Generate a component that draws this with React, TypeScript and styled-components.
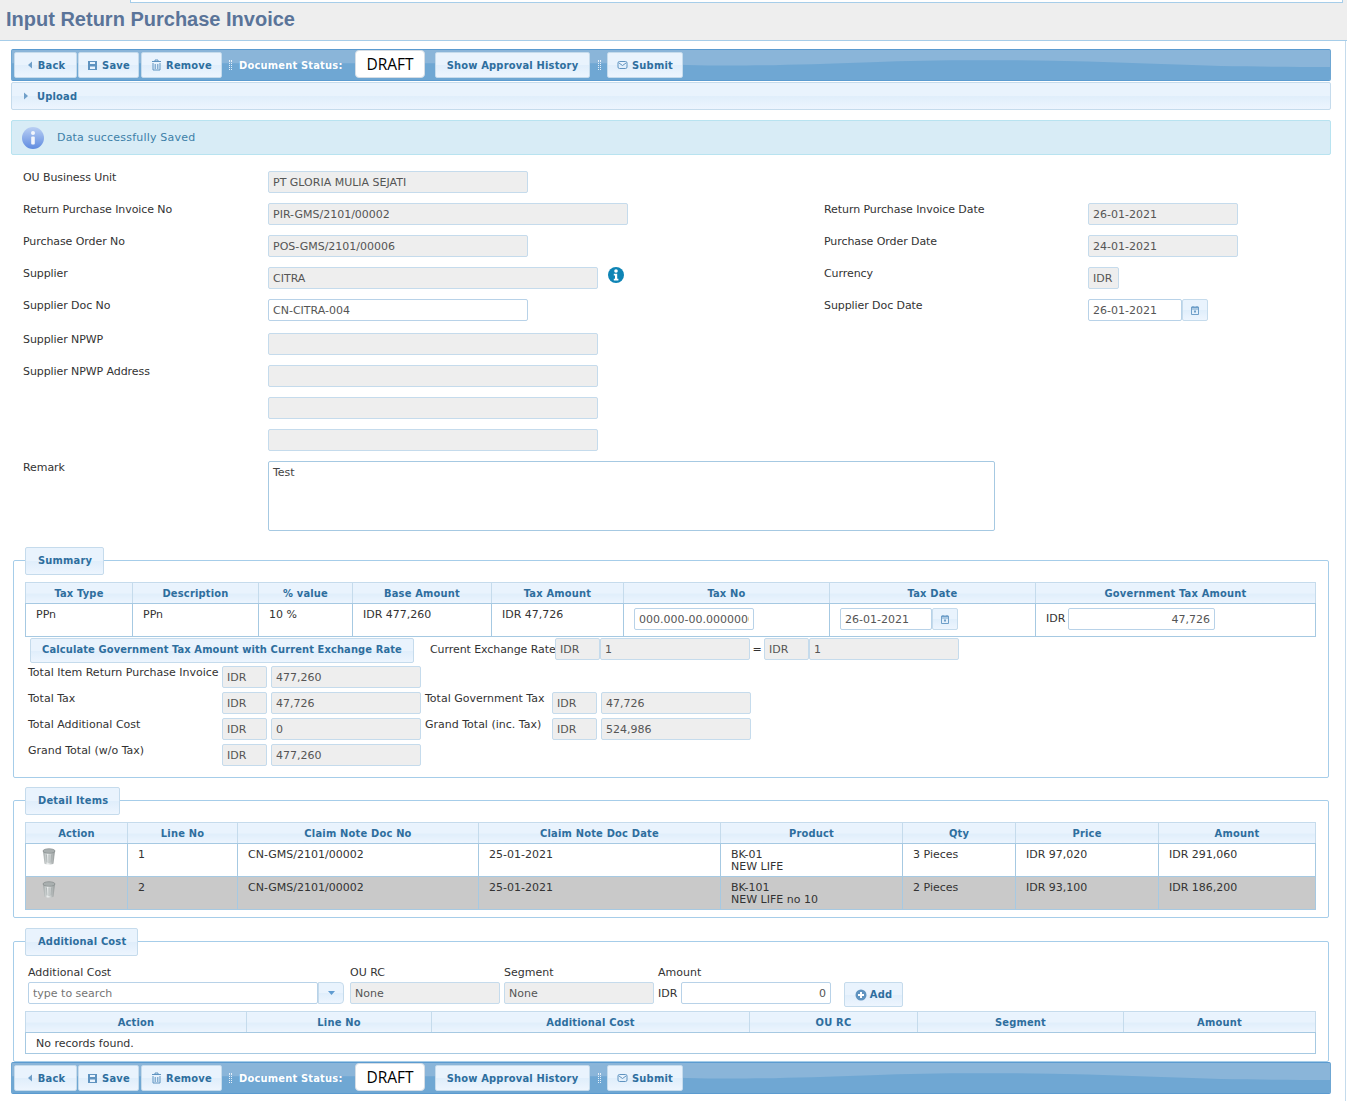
import React from "react";
import styled, { createGlobalStyle } from "styled-components";

const GlobalStyle = createGlobalStyle`
  html, body {
    margin: 0;
    padding: 0;
    background: #fff;
    overflow: hidden;
  }
  body {
    font-family: "DejaVu Sans", Verdana, sans-serif;
    font-size: 11px;
    color: #333;
  }
  * {
    box-sizing: border-box;
  }
`;

const barGradient = "linear-gradient(to bottom, #e9f3fd 0%, #e9f3fd 50%, #e0eefb 52%, #edf5fe 100%)";
const boldFont = `bold 11px "DejaVu Sans Condensed", "DejaVu Sans", Verdana, sans-serif`;

const Page = styled.div`
  width: 1347px;
  height: 1101px;
`;

const TitleBar = styled.div`
  height: 41px;
  background: #eeeeee;
  border-bottom: 1px solid #a6cde9;
  padding-left: 130px;
`;

const TopStripe = styled.div`
  width: 1213px;
  height: 3px;
  background: #fff;
  border: 1px solid #a6cde9;
  border-top: none;
`;

const Title = styled.h1`
  margin: 3px 0 0 -124px;
  font: bold 20px/26px "Liberation Sans", Arial, sans-serif;
  color: #5a7499;
`;

const Content = styled.div`
  width: 1346px;
  border-right: 1px solid #c5dbec;
  padding: 8px 0 0 11px;
  height: 1060px;
`;

const ToolbarWrap = styled.div`
  position: relative;
  width: 1320px;
  height: 32px;
  display: flex;
  align-items: center;
  padding-left: 2px;
  background: #8ab5d9;
  border: 1px solid #5b9bd0;
  border-left-color: #6fa7d3;
  border-right-color: #6fa7d3;
  overflow: hidden;
  border-radius: 2px;
`;

const Wave = styled.svg`
  position: absolute;
  left: 0;
  top: 0;
  width: 100%;
  height: 100%;
`;

const ToolButton = styled.button<{ $w: number; $ml?: number }>`
  position: relative;
  width: ${(p) => p.$w}px;
  height: 26px;
  margin-left: ${(p) => p.$ml ?? 0}px;
  padding: 0;
  display: flex;
  align-items: center;
  justify-content: center;
  gap: 4px;
  background: ${barGradient};
  border: 1px solid #c5dbec;
  border-radius: 2px;
  color: #2e6e9e;
  font: ${boldFont};
  letter-spacing: 0.2px;
  white-space: nowrap;
`;

const Grip = styled.span<{ $ml: number }>`
  position: relative;
  width: 3px;
  height: 10px;
  margin-left: ${(p) => p.$ml}px;
  border-left: 1px dotted #e4eff9;
  border-right: 1px dotted #e4eff9;
`;

const StatusLabel = styled.span`
  position: relative;
  width: 116px;
  margin-left: 7px;
  color: #fff;
  font: ${boldFont};
  letter-spacing: 0.2px;
  white-space: nowrap;
`;

const StatusBox = styled.div`
  position: relative;
  width: 70px;
  height: 28px;
  margin-top: -2px;
  background: #fff;
  border: 1px solid #d5dde5;
  border-radius: 4px;
  color: #000;
  font: 15.5px/26px "Open Sans", "DejaVu Sans", sans-serif;
  text-align: center;
`;

const UploadBar = styled.div`
  width: 1320px;
  height: 28px;
  margin-top: 1px;
  display: flex;
  align-items: center;
  gap: 7px;
  padding-left: 10px;
  background: ${barGradient};
  border: 1px solid #c5dbec;
  border-radius: 2px;
  color: #2e6e9e;
  font: ${boldFont};
  letter-spacing: 0.2px;
`;

const Message = styled.div`
  width: 1320px;
  height: 35px;
  margin-top: 10px;
  display: flex;
  align-items: center;
  gap: 12px;
  padding-left: 9px;
  background: #d8ecf6;
  border: 1px solid #b8e3f0;
  border-radius: 2px;
  color: #3d7fa8;
  letter-spacing: 0.2px;
`;

const Form = styled.div`
  padding: 16px 0 0 12px;
`;

const Row = styled.div<{ $h?: number }>`
  display: flex;
  height: ${(p) => p.$h ?? 32}px;
`;

const Side = styled.div<{ $w: number }>`
  display: flex;
  align-items: flex-start;
  width: ${(p) => p.$w}px;
  flex: none;
`;

const Label = styled.label<{ $w?: number }>`
  width: ${(p) => p.$w ?? 245}px;
  flex: none;
  line-height: 13px;
  color: #333;
  letter-spacing: -0.08px;
  white-space: nowrap;
`;

const Field = styled.input<{ $w: number; $end?: boolean; $ml?: number }>`
  width: ${(p) => p.$w}px;
  height: 22px;
  flex: none;
  margin: 0 0 0 ${(p) => p.$ml ?? 0}px;
  padding: 0 4px;
  background: ${(p) => (p.readOnly ? "#eeeeee" : "#fff")};
  border: 1px solid ${(p) => (p.readOnly ? "#c5dbec" : "#b8d2e8")};
  border-radius: 2px;
  color: #555;
  font: 11px "DejaVu Sans", Verdana, sans-serif;
  text-align: ${(p) => (p.$end ? "right" : "left")};
  outline: none;
`;

const CalButton = styled.span`
  width: 26px;
  height: 22px;
  flex: none;
  display: inline-flex;
  align-items: center;
  justify-content: center;
  background: ${barGradient};
  border: 1px solid #c5dbec;
  border-radius: 2px;
`;

const RemarkBox = styled.textarea`
  width: 727px;
  height: 70px;
  flex: none;
  margin: 0;
  padding: 4px;
  background: #fff;
  border: 1px solid #a6c9e2;
  border-radius: 2px;
  color: #444;
  font: 11px "DejaVu Sans", Verdana, sans-serif;
  resize: none;
  outline: none;
`;

const Fieldset = styled.fieldset<{ $top: number; $h: number }>`
  width: 1316px;
  height: ${(p) => p.$h}px;
  margin: ${(p) => p.$top}px 0 0 2px;
  padding: 8px 11px 0 11px;
  border: 1px solid #a6cde9;
  border-radius: 2px;
  min-width: 0;
`;

const Legend = styled.legend`
  position: relative;
  top: 1px;
  height: 28px;
  padding: 0 11px 0 12px;
  margin: 0;
  background: ${barGradient};
  border: 1px solid #c5dbec;
  border-radius: 2px;
  color: #2e6e9e;
  font: ${boldFont};
  letter-spacing: 0.2px;
  line-height: 25px;
`;

const Table = styled.table`
  width: 1290px;
  border-collapse: collapse;
  table-layout: fixed;
  border: 1px solid #a6c9e2;
`;

const Th = styled.th`
  height: 21px;
  padding: 0;
  background: ${barGradient};
  border: 1px solid #c5dbec;
  border-bottom-color: #a6c9e2;
  color: #2e6e9e;
  font: ${boldFont};
  letter-spacing: 0.2px;
  text-align: center;
`;

const Td = styled.td<{ $dark?: boolean }>`
  height: 33px;
  padding: 5px 10px 0;
  vertical-align: top;
  background: ${(p) => (p.$dark ? "#c9c9c9" : "#fff")};
  border: 1px solid #a6c9e2;
  color: #333;
  line-height: 12px;
  white-space: nowrap;
`;

const CellFlex = styled.div`
  display: flex;
  align-items: center;
  margin-top: -1px;
`;

const UnitText = styled.span<{ $w: number }>`
  width: ${(p) => p.$w}px;
  flex: none;
  color: #333;
`;

const CalcRow = styled.div`
  display: flex;
  align-items: flex-start;
  margin: 1px 0 0 5px;
  height: 28px;
`;

const WideButton = styled.button`
  width: 384px;
  height: 25px;
  flex: none;
  padding: 0 0 2px;
  background: ${barGradient};
  border: 1px solid #c5dbec;
  border-radius: 2px;
  color: #2e6e9e;
  font: ${boldFont};
  letter-spacing: 0.12px;
  white-space: nowrap;
`;

const InlineLabel = styled.span<{ $w: number; $ml?: number; $center?: boolean }>`
  width: ${(p) => p.$w}px;
  flex: none;
  margin-left: ${(p) => p.$ml ?? 0}px;
  line-height: 23px;
  letter-spacing: -0.08px;
  text-align: ${(p) => (p.$center ? "center" : "left")};
  white-space: nowrap;
  color: #333;
`;

const TotalsGrid = styled.div`
  display: flex;
  margin-left: 3px;
`;

const TotalsColumn = styled.div<{ $pt?: number; $ml?: number }>`
  padding-top: ${(p) => p.$pt ?? 0}px;
  margin-left: ${(p) => p.$ml ?? 0}px;
`;

const TotalRow = styled.div`
  display: flex;
  height: 26px;
`;

const TotalLabel = styled.span<{ $w: number }>`
  width: ${(p) => p.$w}px;
  flex: none;
  line-height: 13px;
  white-space: nowrap;
  color: #333;
`;

const AddRow = styled.div`
  display: flex;
  margin: 3px 0 0 3px;
  height: 45px;
`;

const AddCol = styled.div<{ $w: number }>`
  width: ${(p) => p.$w}px;
  flex: none;
  line-height: 13px;
  color: #333;
`;

const AddLabel = styled.div`
  height: 16px;
`;

const Combo = styled.div`
  display: flex;
`;

const ComboArrow = styled.span`
  width: 26px;
  height: 22px;
  display: inline-flex;
  align-items: center;
  justify-content: center;
  background: ${barGradient};
  border: 1px solid #c5dbec;
  border-radius: 0 4px 4px 0;
`;

const AmountLine = styled.div`
  display: flex;
  align-items: center;
`;

const AddButton = styled.button`
  width: 59px;
  height: 25px;
  margin: 16px 0 0 11px;
  padding: 0;
  display: inline-flex;
  align-items: center;
  justify-content: center;
  gap: 3px;
  flex: none;
  background: ${barGradient};
  border: 1px solid #c5dbec;
  border-radius: 2px;
  color: #2e6e9e;
  font: ${boldFont};
  letter-spacing: 0.2px;
`;

const InfoSlot = styled.span`
  margin: 0 0 0 10px;
  display: inline-flex;
`;

const IconCell = styled.div`
  margin-top: -1px;
  padding-left: 6px;
`;

const NoRecords = styled.td`
  height: 21px;
  padding: 0 10px;
  background: #fff;
  border: 1px solid #a6c9e2;
  color: #333;
`;

const BackIcon = () => (
  <svg width="8" height="10" viewBox="0 0 8 10">
    <path d="M6 1.5 2 5l4 3.5z" fill="#6f9fc9" />
  </svg>
);

const RightArrow = () => (
  <svg width="8" height="10" viewBox="0 0 8 10">
    <path d="M2 1.5 6 5 2 8.500z" fill="#6f9fc9" />
  </svg>
);

const SaveIcon = () => (
  <svg width="11" height="11" viewBox="0 0 11 11">
    <path d="M1 1h9v9H1z" fill="#5f93c0" />
    <path d="M3 2h5v2H3zM3 6.500h5V9H3z" fill="#e9f3fd" />
  </svg>
);

const BinIcon = () => (
  <svg width="11" height="12" viewBox="0 0 11 12">
    <path d="M1 2.500h9M4 2.500V1h3v1.500M2 4v7h7V4M4.200 5v5M6.800 5v5" fill="none" stroke="#5f93c0" strokeWidth="1" />
  </svg>
);

const MailIcon = () => (
  <svg width="11" height="10" viewBox="0 0 11 10">
    <rect x="1" y="1.500" width="9" height="7" rx="1.500" fill="none" stroke="#5f93c0" />
    <path d="M2 3l3.500 2.500L9 3" fill="none" stroke="#5f93c0" />
  </svg>
);

const CalendarIcon = () => (
  <svg width="10" height="11" viewBox="0 0 10 11">
    <path d="M1.500 2.500h7v7h-7z" fill="none" stroke="#6f9fc9" />
    <path d="M1.500 2h7v2h-7zM3 1v1.500M7 1v1.500" fill="none" stroke="#6f9fc9" />
    <rect x="4" y="5.500" width="2" height="2" fill="#6f9fc9" />
  </svg>
);

const DownIcon = () => (
  <svg width="9" height="6" viewBox="0 0 9 6">
    <path d="M1 1h7L4.500 5z" fill="#5f9bd0" />
  </svg>
);

const PlusIcon = () => (
  <svg width="12" height="12" viewBox="0 0 12 12">
    <circle cx="6" cy="6" r="5.500" fill="#5f93c0" />
    <path d="M6 3v6M3 6h6" stroke="#fff" strokeWidth="2" />
  </svg>
);

const GlossyInfo = () => (
  <svg width="24" height="24" viewBox="0 0 24 24">
    <defs>
      <linearGradient id="gloss" x1="0" y1="0" x2="0" y2="1">
        <stop offset="0" stopColor="#b9cff3" />
        <stop offset="1" stopColor="#5f8be0" />
      </linearGradient>
    </defs>
    <circle cx="12" cy="12" r="11" fill="url(#gloss)" />
    <circle cx="12" cy="7" r="2" fill="#f3f6fc" />
    <rect x="10.200" y="10.500" width="3.600" height="8" rx="1" fill="#f3f6fc" />
  </svg>
);

const SolidInfo = () => (
  <svg width="16" height="16" viewBox="0 0 16 16">
    <circle cx="8" cy="8" r="8" fill="#0e84b5" />
    <circle cx="8" cy="4" r="1.800" fill="#fff" />
    <path d="M5.800 6.800h3.400v5h1.200v1.600H5.800v-1.600H7v-3.400H5.800z" fill="#fff" />
  </svg>
);

const TrashCan = () => (
  <svg width="14" height="17" viewBox="0 0 14 17">
    <defs>
      <linearGradient id="can" x1="0" y1="0" x2="1" y2="0">
        <stop offset="0" stopColor="#9aa1a1" />
        <stop offset="0.4" stopColor="#eef1f1" />
        <stop offset="1" stopColor="#8f9595" />
      </linearGradient>
    </defs>
    <path d="M1 3l1.500 12.500c.5 1.300 8.500 1.300 9 0L13 3z" fill="url(#can)" />
    <ellipse cx="7" cy="3" rx="6" ry="2.300" fill="#a9afaf" stroke="#7e8585" strokeWidth="0.600" />
    <path d="M4.500 6.500l.5 8M7 6.500v8.500M9.500 6.500l-.5 8" stroke="#a2a9a9" strokeWidth="0.800" />
  </svg>
);

function Toolbar() {
  return (
    <ToolbarWrap>
      <Wave viewBox="0 0 1319 32" preserveAspectRatio="none">
        <path
          d="M0 32V14C250 14 440 14 640 14C690 18 760 17 860 13C950 9 1050 11 1150 15C1220 18 1270 18 1319 18V32z"
          fill="#6fa7d3"
        />
      </Wave>
      <ToolButton $w={63}>
        <BackIcon />
        Back
      </ToolButton>
      <ToolButton $w={61} $ml={1}>
        <SaveIcon />
        Save
      </ToolButton>
      <ToolButton $w={81} $ml={2}>
        <BinIcon />
        Remove
      </ToolButton>
      <Grip $ml={7} />
      <StatusLabel>Document Status:</StatusLabel>
      <StatusBox>DRAFT</StatusBox>
      <ToolButton $w={155} $ml={10}>
        Show Approval History
      </ToolButton>
      <Grip $ml={8} />
      <ToolButton $w={76} $ml={6}>
        <MailIcon />
        Submit
      </ToolButton>
    </ToolbarWrap>
  );
}

const Cols = ({ widths }: { widths: number[] }) => (
  <colgroup>
    {widths.map((w, i) => (
      <col key={i} style={{ width: w }} />
    ))}
  </colgroup>
);

function FormRow({
  label,
  children,
  rightLabel,
  right,
  h,
}: {
  label: string;
  children?: React.ReactNode;
  rightLabel?: string;
  right?: React.ReactNode;
  h?: number;
}) {
  return (
    <Row $h={h}>
      <Side $w={801}>
        <Label>{label}</Label>
        {children}
      </Side>
      {rightLabel && (
        <Side $w={500}>
          <Label $w={264}>{rightLabel}</Label>
          {right}
        </Side>
      )}
    </Row>
  );
}

export default function App() {
  return (
    <Page>
      <GlobalStyle />
      <TitleBar>
        <TopStripe />
        <Title>Input Return Purchase Invoice</Title>
      </TitleBar>
      <Content>
        <Toolbar />
        <UploadBar>
          <RightArrow />
          Upload
        </UploadBar>
        <Message>
          <GlossyInfo />
          Data successfully Saved
        </Message>
        <Form>
          <FormRow label="OU Business Unit">
            <Field readOnly value="PT GLORIA MULIA SEJATI" $w={260} />
          </FormRow>
          <FormRow
            label="Return Purchase Invoice No"
            rightLabel="Return Purchase Invoice Date"
            right={<Field readOnly value="26-01-2021" $w={150} />}
          >
            <Field readOnly value="PIR-GMS/2101/00002" $w={360} />
          </FormRow>
          <FormRow
            label="Purchase Order No"
            rightLabel="Purchase Order Date"
            right={<Field readOnly value="24-01-2021" $w={150} />}
          >
            <Field readOnly value="POS-GMS/2101/00006" $w={260} />
          </FormRow>
          <FormRow label="Supplier" rightLabel="Currency" right={<Field readOnly value="IDR" $w={31} />}>
            <Field readOnly value="CITRA" $w={330} />
            <InfoSlot>
              <SolidInfo />
            </InfoSlot>
          </FormRow>
          <FormRow
            h={34}
            label="Supplier Doc No"
            rightLabel="Supplier Doc Date"
            right={
              <>
                <Field defaultValue="26-01-2021" $w={94} />
                <CalButton>
                  <CalendarIcon />
                </CalButton>
              </>
            }
          >
            <Field defaultValue="CN-CITRA-004" $w={260} />
          </FormRow>
          <FormRow label="Supplier NPWP">
            <Field readOnly value="" $w={330} />
          </FormRow>
          <FormRow label="Supplier NPWP Address">
            <Field readOnly value="" $w={330} />
          </FormRow>
          <FormRow label="">
            <Field readOnly value="" $w={330} />
          </FormRow>
          <FormRow label="">
            <Field readOnly value="" $w={330} />
          </FormRow>
          <FormRow label="Remark" h={70}>
            <RemarkBox defaultValue="Test" />
          </FormRow>
        </Form>

        <Fieldset $top={15} $h={232}>
          <Legend>Summary</Legend>
          <Table>
            <Cols widths={[107, 126, 94, 139, 132, 206, 206, 280]} />
            <thead>
              <tr>
                {["Tax Type", "Description", "% value", "Base Amount", "Tax Amount", "Tax No", "Tax Date", "Government Tax Amount"].map((h) => (
                  <Th key={h}>{h}</Th>
                ))}
              </tr>
            </thead>
            <tbody>
              <tr>
                <Td>PPn</Td>
                <Td>PPn</Td>
                <Td>10 %</Td>
                <Td>IDR 477,260</Td>
                <Td>IDR 47,726</Td>
                <Td>
                  <CellFlex>
                    <Field defaultValue="000.000-00.00000000" $w={120} />
                  </CellFlex>
                </Td>
                <Td>
                  <CellFlex>
                    <Field defaultValue="26-01-2021" $w={92} />
                    <CalButton>
                      <CalendarIcon />
                    </CalButton>
                  </CellFlex>
                </Td>
                <Td>
                  <CellFlex>
                    <UnitText $w={22}>IDR</UnitText>
                    <Field defaultValue="47,726" $w={147} $end />
                  </CellFlex>
                </Td>
              </tr>
            </tbody>
          </Table>
          <CalcRow>
            <WideButton>Calculate Government Tax Amount with Current Exchange Rate</WideButton>
            <InlineLabel $w={125} $ml={16}>Current Exchange Rate</InlineLabel>
            <Field readOnly value="IDR" $w={45} />
            <Field readOnly value="1" $w={150} />
            <InlineLabel $w={14} $center>=</InlineLabel>
            <Field readOnly value="IDR" $w={45} />
            <Field readOnly value="1" $w={150} />
          </CalcRow>
          <TotalsGrid>
            <TotalsColumn>
              {[
                ["Total Item Return Purchase Invoice", "477,260"],
                ["Total Tax", "47,726"],
                ["Total Additional Cost", "0"],
                ["Grand Total (w/o Tax)", "477,260"],
              ].map(([l, v]) => (
                <TotalRow key={l}>
                  <TotalLabel $w={194}>{l}</TotalLabel>
                  <Field readOnly value="IDR" $w={45} />
                  <Field readOnly value={v} $w={150} $ml={4} />
                </TotalRow>
              ))}
            </TotalsColumn>
            <TotalsColumn $pt={26} $ml={4}>
              {[
                ["Total Government Tax", "47,726"],
                ["Grand Total (inc. Tax)", "524,986"],
              ].map(([l, v]) => (
                <TotalRow key={l}>
                  <TotalLabel $w={127}>{l}</TotalLabel>
                  <Field readOnly value="IDR" $w={45} />
                  <Field readOnly value={v} $w={150} $ml={4} />
                </TotalRow>
              ))}
            </TotalsColumn>
          </TotalsGrid>
        </Fieldset>

        <Fieldset $top={8} $h={132}>
          <Legend>Detail Items</Legend>
          <Table>
            <Cols widths={[102, 110, 241, 242, 182, 113, 143, 157]} />
            <thead>
              <tr>
                {["Action", "Line No", "Claim Note Doc No", "Claim Note Doc Date", "Product", "Qty", "Price", "Amount"].map((h) => (
                  <Th key={h}>{h}</Th>
                ))}
              </tr>
            </thead>
            <tbody>
              <tr>
                <Td>
                  <IconCell>
                    <TrashCan />
                  </IconCell>
                </Td>
                <Td>1</Td>
                <Td>CN-GMS/2101/00002</Td>
                <Td>25-01-2021</Td>
                <Td>
                  BK-01
                  <br />
                  NEW LIFE
                </Td>
                <Td>3 Pieces</Td>
                <Td>IDR 97,020</Td>
                <Td>IDR 291,060</Td>
              </tr>
              <tr>
                <Td $dark>
                  <IconCell>
                    <TrashCan />
                  </IconCell>
                </Td>
                <Td $dark>2</Td>
                <Td $dark>CN-GMS/2101/00002</Td>
                <Td $dark>25-01-2021</Td>
                <Td $dark>
                  BK-101
                  <br />
                  NEW LIFE no 10
                </Td>
                <Td $dark>2 Pieces</Td>
                <Td $dark>IDR 93,100</Td>
                <Td $dark>IDR 186,200</Td>
              </tr>
            </tbody>
          </Table>
        </Fieldset>

        <Fieldset $top={9} $h={135}>
          <Legend>Additional Cost</Legend>
          <AddRow>
            <AddCol $w={322}>
              <AddLabel>Additional Cost</AddLabel>
              <Combo>
                <Field defaultValue="" placeholder="type to search" $w={290} />
                <ComboArrow>
                  <DownIcon />
                </ComboArrow>
              </Combo>
            </AddCol>
            <AddCol $w={154}>
              <AddLabel>OU RC</AddLabel>
              <Field readOnly value="None" $w={150} />
            </AddCol>
            <AddCol $w={154}>
              <AddLabel>Segment</AddLabel>
              <Field readOnly value="None" $w={150} />
            </AddCol>
            <AddCol $w={175}>
              <AddLabel>Amount</AddLabel>
              <AmountLine>
                <UnitText $w={23}>IDR</UnitText>
                <Field defaultValue="0" $w={150} $end />
              </AmountLine>
            </AddCol>
            <AddButton>
              <PlusIcon />
              Add
            </AddButton>
          </AddRow>
          <Table>
            <Cols widths={[221, 185, 318, 168, 206, 192]} />
            <thead>
              <tr>
                {["Action", "Line No", "Additional Cost", "OU RC", "Segment", "Amount"].map((h) => (
                  <Th key={h}>{h}</Th>
                ))}
              </tr>
            </thead>
            <tbody>
              <tr>
                <NoRecords colSpan={6}>No records found.</NoRecords>
              </tr>
            </tbody>
          </Table>
        </Fieldset>
        <Toolbar />
      </Content>
    </Page>
  );
}
